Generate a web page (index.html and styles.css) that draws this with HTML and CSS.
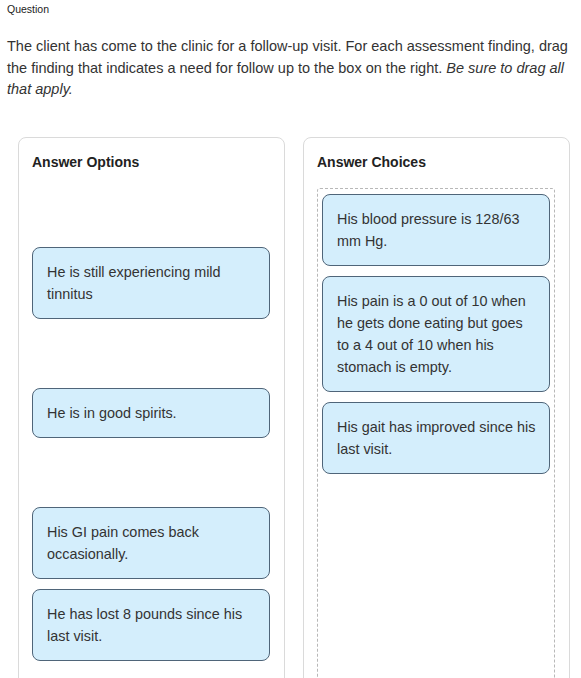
FILE: index.html
```html
<!DOCTYPE html>
<html lang="en">
<head>
<meta charset="utf-8">
<title>Question</title>
<link rel="stylesheet" href="styles.css">
</head>
<body>
<div class="page">
  <div class="label">Question</div>
  <p class="stem">The client has come to the clinic for a follow-up visit. For each assessment finding, drag the finding that indicates a need for follow up to the box on the right. <em>Be sure to drag all that apply.</em></p>
  <div class="panels">
    <section class="panel">
      <h2 class="panel-title">Answer Options</h2>
      <div class="options">
        <div class="slot"></div>
        <div class="card">He is still experiencing mild tinnitus</div>
        <div class="slot"></div>
        <div class="card">He is in good spirits.</div>
        <div class="slot"></div>
        <div class="card">His GI pain comes back occasionally.</div>
        <div class="card">He has lost 8 pounds since his last visit.</div>
        <div class="slot"></div>
      </div>
    </section>
    <section class="panel">
      <h2 class="panel-title">Answer Choices</h2>
      <div class="dropzone">
        <div class="card">His blood pressure is 128/63 mm Hg.</div>
        <div class="card">His pain is a 0 out of 10 when he gets done eating but goes to a 4 out of 10 when his stomach is empty.</div>
        <div class="card">His gait has improved since his last visit.</div>
      </div>
    </section>
  </div>
</div>
</body>
</html>
```

FILE: styles.css
```css
* { box-sizing: border-box; }
html, body { margin: 0; padding: 0; background: #fff; }
body {
  font-family: "Liberation Sans", Arial, sans-serif;
  color: #333;
}
.page {
  padding: 3px 7px 0 7px;
}
.label {
  font-size: 10.5px;
  line-height: 13px;
  color: #222;
}
.stem {
  margin: 20px 0 0 0;
  font-size: 14.5px;
  line-height: 21.5px;
  color: #333;
}
.stem em { font-style: italic; }
.panels {
  display: grid;
  grid-template-columns: 267px 267px;
  column-gap: 18px;
  margin: 36px 0 0 11px;
}
.panel {
  border: 1px solid #dadada;
  border-radius: 8px;
  padding: 13px 14px 40px 13px;
  min-height: 620px;
}
.panel-title {
  margin: 0 0 15px 0;
  font-size: 14px;
  line-height: 22px;
  font-weight: bold;
  color: #222;
}
.options {
  display: flex;
  flex-direction: column;
  gap: 10px;
}
.slot { height: 49px; }
.card {
  background: #d4eefc;
  border: 1px solid #4f6579;
  border-radius: 8px;
  padding: 13px 11px 13px 14px;
  font-size: 14.4px;
  line-height: 22px;
  color: #333;
}
.dropzone {
  border: 1px dashed #b8b8b8;
  border-radius: 3px;
  padding: 5px 4px;
  min-height: 520px;
  display: flex;
  flex-direction: column;
  gap: 10px;
}
```
